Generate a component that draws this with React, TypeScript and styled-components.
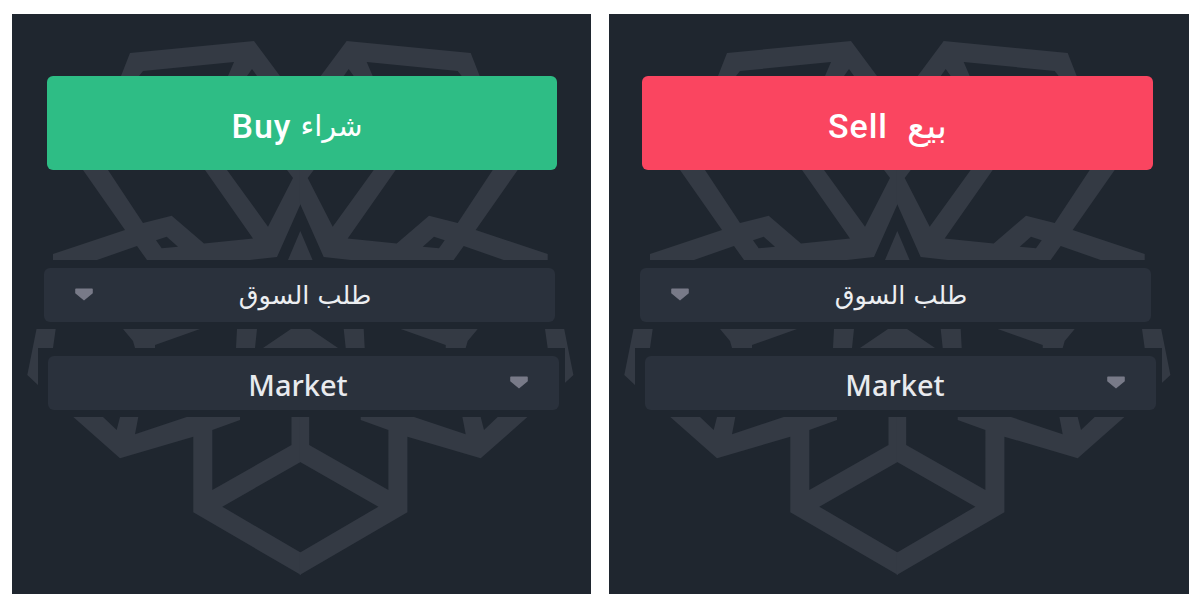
import React from "react";
import styled, { createGlobalStyle } from "styled-components";

const Global = createGlobalStyle`
  html, body { margin: 0; padding: 0; background: #fff; }
  body { font-family: "Noto Sans", "DejaVu Sans", sans-serif; }
`;

const Page = styled.div`
  display: flex;
  gap: 18px;
  width: 1200px;
  height: 608px;
  box-sizing: border-box;
  padding: 14px 0 0 12px;
  overflow: hidden;
`;

const Panel = styled.section<{ $w: number }>`
  position: relative;
  flex: none;
  width: ${(p) => p.$w}px;
  height: 580px;
  box-sizing: border-box;
  padding-top: 62px;
  background: #1f262f;
`;

const Mark = styled.svg`
  position: absolute;
  left: 0;
  top: 0;
  width: 579px;
  height: 580px;
`;

const ActionButton = styled.button<{ $bg: string; $x: number; $w: number; $shift: number }>`
  position: relative;
  display: flex;
  align-items: center;
  justify-content: center;
  width: ${(p) => p.$w}px;
  height: 94px;
  margin: 0 0 90px ${(p) => p.$x}px;
  padding: 6px ${(p) => p.$shift}px 0 0;
  border: 0;
  border-radius: 6px;
  background: ${(p) => p.$bg};
  color: #fff;
`;

const Latin = styled.span`
  font-family: Roboto, "Noto Sans", sans-serif;
  font-size: 34px;
  font-weight: 500;
  letter-spacing: 1px;
  line-height: 1;
`;

const Arabic = styled.span<{ $gap: number; $size: number }>`
  margin-left: ${(p) => p.$gap}px;
  font-family: "DejaVu Sans", sans-serif;
  font-size: ${(p) => p.$size}px;
  line-height: 1;
`;

const SelectBand = styled.div<{ $x: number; $below: number }>`
  position: relative;
  width: 527px;
  box-sizing: border-box;
  margin: 0 0 ${(p) => p.$below}px ${(p) => p.$x}px;
  padding: 8px 6px 7px 10px;
  background: #1f262f;
`;

const Select = styled.div`
  display: grid;
  grid-template-columns: 1fr auto 1fr;
  align-items: center;
  width: 511px;
  height: 54px;
  border-radius: 6px;
  background: #2a313c;
`;

const Caret = styled.svg<{ $side: "left" | "right" }>`
  grid-column: ${(p) => (p.$side === "left" ? 1 : 3)};
  grid-row: 1;
  justify-self: ${(p) => (p.$side === "left" ? "start" : "end")};
  width: 18px;
  height: 13px;
  margin: 0 31px 1px;
`;

const ArabicValue = styled.span<{ $shift: number }>`
  grid-column: 2;
  grid-row: 1;
  margin-left: ${(p) => p.$shift}px;
  font-family: "DejaVu Sans", sans-serif;
  font-size: 25.5px;
  color: #eceef1;
`;

const LatinValue = styled.span<{ $shift: number }>`
  grid-column: 2;
  grid-row: 1;
  margin: 2px ${(p) => p.$shift}px 0 0;
  font-family: "Noto Sans", sans-serif;
  font-size: 29px;
  font-weight: 500;
  line-height: 1;
  color: #e8eaee;
`;

const LEFT_TOP = "M130 53L254 41L280 76L257 76L252 69L247 76L228 76L234 62L143 71L139 76L121 76Z";
const LEFT_MID =
  "M83 170L125 230L53 254L53 260L97 260L137 246L147 260L250 260L277 257L301 203L301 170L287 170L293 178L268 226.7L227 170L205 170L253 238.5L204 243.5L171.7 215.7L143 223L108 170Z" +
  "M156 240.3L166.7 236.7L178 246.7L161.7 248.3Z";
const LEFT_BAND =
  "M36.5 329L55.7 329L53 348L38 348L38 385L27.3 375Z" +
  "M123 329L200 329L155 345L155 348L135 348L133 341Z" +
  "M237 329L257 329L255 348L236 348Z";
const LEFT_BOTTOM =
  "M73.3 417L103 417L116.7 430L120 417L138.3 417L135 434.3L186.7 417L240 417L240 420L212.3 430L212.3 490L291.5 445L291.5 417L301 417L301 461.7L222.3 506.7L301 552.7L301 575L193.3 512.3L193.3 436.7L120 458.3Z";
const CENTER = "M300.3 231L288 260L312.6 260ZM263 348L291 329L310 329L338 348Z";

function Watermark() {
  const half = (
    <>
      <path d={LEFT_TOP} />
      <path d={LEFT_MID} fillRule="evenodd" />
      <path d={LEFT_BAND} />
      <path d={LEFT_BOTTOM} />
    </>
  );
  return (
    <Mark viewBox="12 14 579 580" fill="#343a44" aria-hidden="true">
      {half}
      <g transform="matrix(-1 0 0 1 600.7 0)">{half}</g>
      <path d={CENTER} />
    </Mark>
  );
}

function CaretIcon({ side }: { side: "left" | "right" }) {
  return (
    <Caret $side={side} viewBox="0 0 18 13" aria-hidden="true">
      <path d="M1 0.5H17a0.8 0.8 0 0 1 .8 .8V5.2L9 12.6L0.2 5.2V1.3A.8 .8 0 0 1 1 .5Z" fill="#787a88" />
    </Caret>
  );
}

type TradeProps = {
  width: number;
  color: string;
  btnX: number;
  btnW: number;
  label: string;
  arabic: string;
  size: number;
  gap: number;
  shift: number;
  rowX: number;
};

function TradePanel({ width, color, btnX, btnW, label, arabic, size, gap, shift, rowX }: TradeProps) {
  return (
    <Panel $w={width}>
      <Watermark />
      <ActionButton $bg={color} $x={btnX} $w={btnW} $shift={shift}>
        <Latin>{label}</Latin>
        <Arabic $gap={gap} $size={size}>{arabic}</Arabic>
      </ActionButton>
      <SelectBand $x={rowX} $below={19}>
        <Select>
          <CaretIcon side="left" />
          <ArabicValue $shift={11}>طلب السوق</ArabicValue>
        </Select>
      </SelectBand>
      <SelectBand $x={26} $below={0}>
        <Select>
          <LatinValue $shift={11}>Market</LatinValue>
          <CaretIcon side="right" />
        </Select>
      </SelectBand>
    </Panel>
  );
}

export default function App() {
  return (
    <>
      <Global />
      <Page>
        <TradePanel width={579} color="#2ebd85" btnX={35} btnW={510} label="Buy" arabic="شراء" size={29} gap={9} shift={10} rowX={22} />
        <TradePanel width={580} color="#fa4560" btnX={33} btnW={511} label="Sell" arabic="بيع" size={36} gap={19} shift={20} rowX={21} />
      </Page>
    </>
  );
}
